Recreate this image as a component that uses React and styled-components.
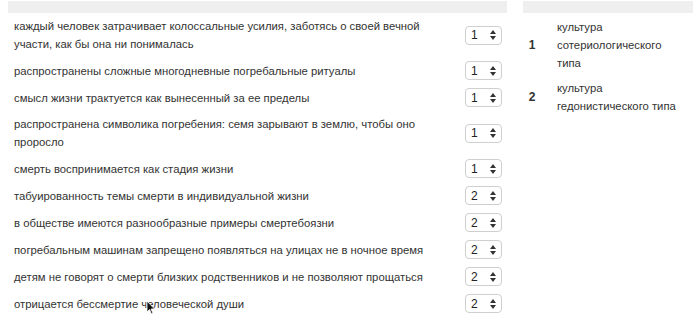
import React from "react";
import styled, { createGlobalStyle } from "styled-components";

const Global = createGlobalStyle`
  html, body { margin: 0; padding: 0; background: #fff; }
  body { font-family: "Liberation Sans", Arial, sans-serif; color: #333; }
`;

const Page = styled.div`
  position: relative;
  display: flex;
  align-items: flex-start;
  gap: 16px;
  padding: 1px 0 0 8px;
  width: 699px;
  height: 325px;
  box-sizing: border-box;
  overflow: hidden;
`;

const Panel = styled.div`
  width: ${(p) => p.$w}px;
  display: flex;
  flex-direction: column;
`;

const HeadBar = styled.div`
  height: 12px;
  background: #efefef;
`;

const Rows = styled.div`
  display: flex;
  flex-direction: column;
  gap: 8px;
  margin-top: 4px;
`;

const Row = styled.div`
  display: grid;
  grid-template-columns: 1fr 37px;
  column-gap: 30px;
  align-items: center;
  padding: 0 5px 0 6px;
`;

const RowText = styled.div`
  font-size: 11.3px;
  line-height: 18px;
  color: #333;
`;

const Select = styled.div`
  height: 19px;
  box-sizing: border-box;
  border: 1px solid #cfcfcf;
  border-radius: 4px;
  background: #fff;
  display: flex;
  align-items: center;
  justify-content: space-between;
  padding: 0 5px 0 5px;
  font-size: 12px;
  color: #222;
`;

const Items = styled.div`
  display: flex;
  flex-direction: column;
  gap: 7px;
  margin-top: 5px;
`;

const Item = styled.div`
  display: grid;
  grid-template-columns: 18px 126px;
  column-gap: 16px;
  align-items: center;
`;

const Num = styled.div`
  font-size: 12px;
  font-weight: bold;
  text-align: center;
  color: #333;
`;

const ItemText = styled.div`
  font-size: 11.3px;
  line-height: 18px;
  color: #333;
`;

const Cursor = styled.svg`
  position: absolute;
  left: 146px;
  top: 300px;
`;

const Arrows = () => (
  <svg width="6" height="10" viewBox="0 0 6 10">
    <path d="M3 0 L6 4 L0 4 Z" fill="#333" />
    <path d="M0 6 L6 6 L3 10 Z" fill="#333" />
  </svg>
);

const rows = [
  ["каждый человек затрачивает колоссальные усилия, заботясь о своей вечной участи, как бы она ни понималась", "1"],
  ["распространены сложные многодневные погребальные ритуалы", "1"],
  ["смысл жизни трактуется как вынесенный за ее пределы", "1"],
  ["распространена символика погребения: семя зарывают в землю, чтобы оно проросло", "1"],
  ["смерть воспринимается как стадия жизни", "1"],
  ["табуированность темы смерти в индивидуальной жизни", "2"],
  ["в обществе имеются разнообразные примеры смертебоязни", "2"],
  ["погребальным машинам запрещено появляться на улицах не в ночное время", "2"],
  ["детям не говорят о смерти близких родственников и не позволяют прощаться", "2"],
  ["отрицается бессмертие человеческой души", "2"],
];

const items = [
  ["1", "культура сотериологического типа"],
  ["2", "культура гедонистического типа"],
];

export default function App() {
  return (
    <>
      <Global />
      <Page>
        <Panel $w={499}>
          <HeadBar />
          <Rows>
            {rows.map(([t, v], i) => (
              <Row key={i}>
                <RowText>{t}</RowText>
                <Select>
                  <span>{v}</span>
                  <Arrows />
                </Select>
              </Row>
            ))}
          </Rows>
        </Panel>
        <Panel $w={170}>
          <HeadBar />
          <Items>
            {items.map(([n, t]) => (
              <Item key={n}>
                <Num>{n}</Num>
                <ItemText>{t}</ItemText>
              </Item>
            ))}
          </Items>
        </Panel>
        <Cursor width="10" height="15" viewBox="0 0 10 15">
          <path d="M1 1 L1 12 L3.5 9.5 L5.5 14 L7 13.3 L5 9 L8.5 9 Z" fill="#111" stroke="#fff" strokeWidth="0.8" />
        </Cursor>
      </Page>
    </>
  );
}
